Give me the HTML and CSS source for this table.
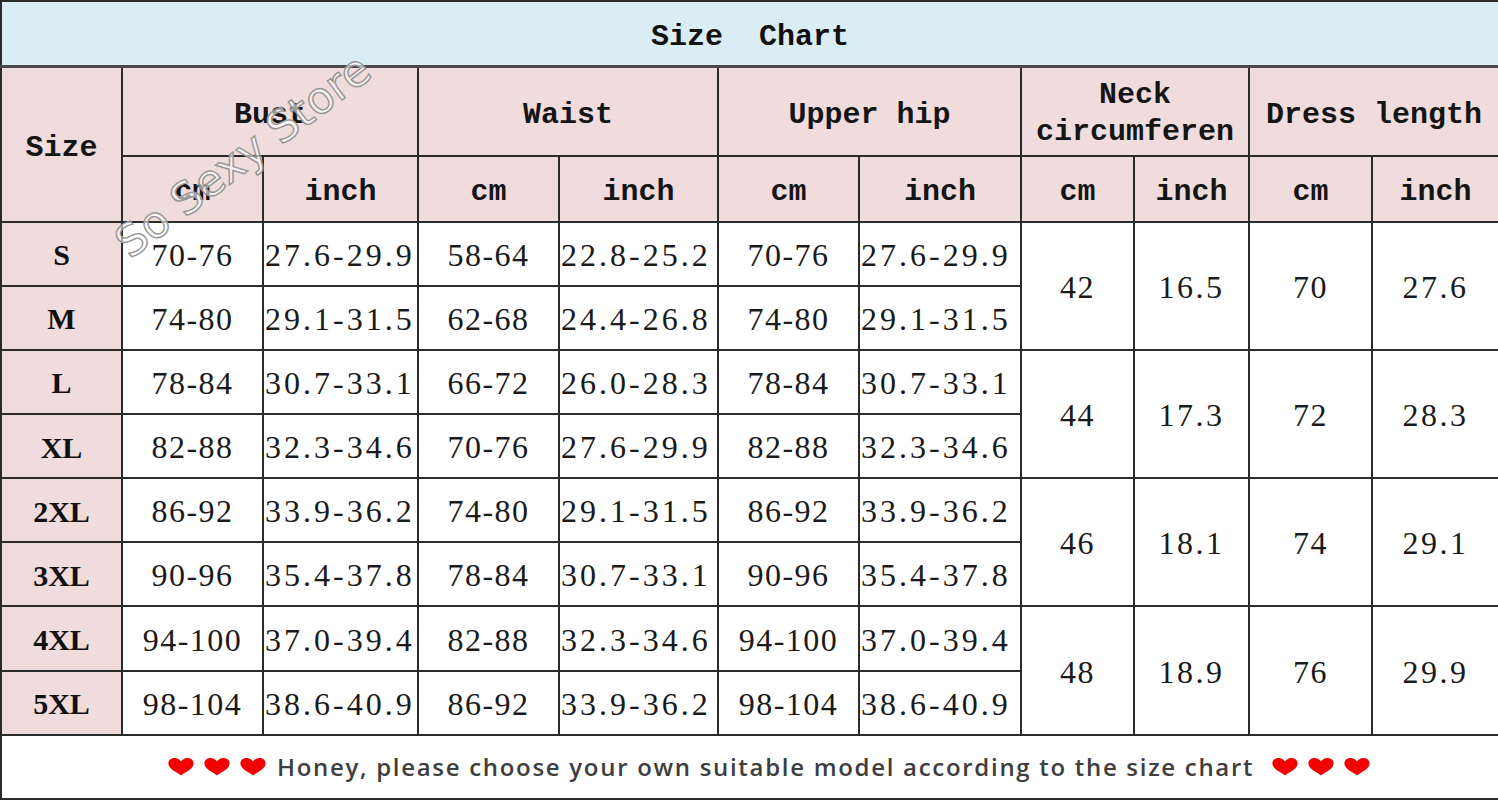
FILE: index.html
```html
<!DOCTYPE html>
<html>
<head>
<meta charset="utf-8">
<link rel="stylesheet" href="styles.css">
</head>
<body>
<div class="sheet">
<table class="chart">
  <colgroup>
    <col class="c-size"><col class="c1"><col class="c2"><col class="c3"><col class="c4"><col class="c5"><col class="c6"><col class="c7"><col class="c8"><col class="c9"><col class="c10">
  </colgroup>
  <tr class="title-row"><td colspan="11" class="title">Size&nbsp; Chart</td></tr>
  <tr class="head1">
    <td rowspan="2" class="hd">Size</td>
    <td colspan="2" class="hd">Bust</td>
    <td colspan="2" class="hd">Waist</td>
    <td colspan="2" class="hd">Upper hip</td>
    <td colspan="2" class="hd neck">Neck<br>circumferen</td>
    <td colspan="2" class="hd">Dress length</td>
  </tr>
  <tr class="head2">
    <td class="hd">cm</td><td class="hd">inch</td>
    <td class="hd">cm</td><td class="hd">inch</td>
    <td class="hd">cm</td><td class="hd">inch</td>
    <td class="hd">cm</td><td class="hd">inch</td>
    <td class="hd">cm</td><td class="hd">inch</td>
  </tr>
  <tr class="row">
    <td class="sz">S</td><td>70-76</td><td class="in">27.6-29.9</td><td>58-64</td><td class="in">22.8-25.2</td><td>70-76</td><td class="in">27.6-29.9</td>
    <td rowspan="2">42</td><td rowspan="2" class="dec">16.5</td><td rowspan="2">70</td><td rowspan="2" class="dec">27.6</td>
  </tr>
  <tr class="row">
    <td class="sz">M</td><td>74-80</td><td class="in">29.1-31.5</td><td>62-68</td><td class="in">24.4-26.8</td><td>74-80</td><td class="in">29.1-31.5</td>
  </tr>
  <tr class="row grp">
    <td class="sz">L</td><td>78-84</td><td class="in">30.7-33.1</td><td>66-72</td><td class="in">26.0-28.3</td><td>78-84</td><td class="in">30.7-33.1</td>
    <td rowspan="2">44</td><td rowspan="2" class="dec">17.3</td><td rowspan="2">72</td><td rowspan="2" class="dec">28.3</td>
  </tr>
  <tr class="row">
    <td class="sz">XL</td><td>82-88</td><td class="in">32.3-34.6</td><td>70-76</td><td class="in">27.6-29.9</td><td>82-88</td><td class="in">32.3-34.6</td>
  </tr>
  <tr class="row grp">
    <td class="sz">2XL</td><td>86-92</td><td class="in">33.9-36.2</td><td>74-80</td><td class="in">29.1-31.5</td><td>86-92</td><td class="in">33.9-36.2</td>
    <td rowspan="2">46</td><td rowspan="2" class="dec">18.1</td><td rowspan="2">74</td><td rowspan="2" class="dec">29.1</td>
  </tr>
  <tr class="row">
    <td class="sz">3XL</td><td>90-96</td><td class="in">35.4-37.8</td><td>78-84</td><td class="in">30.7-33.1</td><td>90-96</td><td class="in">35.4-37.8</td>
  </tr>
  <tr class="row grp">
    <td class="sz">4XL</td><td>94-100</td><td class="in">37.0-39.4</td><td>82-88</td><td class="in">32.3-34.6</td><td>94-100</td><td class="in">37.0-39.4</td>
    <td rowspan="2">48</td><td rowspan="2" class="dec">18.9</td><td rowspan="2">76</td><td rowspan="2" class="dec">29.9</td>
  </tr>
  <tr class="row">
    <td class="sz">5XL</td><td>98-104</td><td class="in">38.6-40.9</td><td>86-92</td><td class="in">33.9-36.2</td><td>98-104</td><td class="in">38.6-40.9</td>
  </tr>
  <tr class="foot-row">
    <td colspan="11" class="foot">
      <div class="note">
        <span class="hearts">
          <svg class="heart" viewBox="0 0 28 20"><path d="M14 19.5C10 16 0 12.5 0 6.2C0 2.4 3 0 7 0C10.2 0 12.4 1.8 14 4C15.6 1.8 17.8 0 21 0C25 0 28 2.4 28 6.2C28 12.5 18 16 14 19.5Z"/></svg>
          <svg class="heart" viewBox="0 0 28 20"><path d="M14 19.5C10 16 0 12.5 0 6.2C0 2.4 3 0 7 0C10.2 0 12.4 1.8 14 4C15.6 1.8 17.8 0 21 0C25 0 28 2.4 28 6.2C28 12.5 18 16 14 19.5Z"/></svg>
          <svg class="heart" viewBox="0 0 28 20"><path d="M14 19.5C10 16 0 12.5 0 6.2C0 2.4 3 0 7 0C10.2 0 12.4 1.8 14 4C15.6 1.8 17.8 0 21 0C25 0 28 2.4 28 6.2C28 12.5 18 16 14 19.5Z"/></svg>
        </span>
        <span class="note-text">Honey, please choose your own suitable model according to the size chart</span>
        <span class="hearts right">
          <svg class="heart" viewBox="0 0 28 20"><path d="M14 19.5C10 16 0 12.5 0 6.2C0 2.4 3 0 7 0C10.2 0 12.4 1.8 14 4C15.6 1.8 17.8 0 21 0C25 0 28 2.4 28 6.2C28 12.5 18 16 14 19.5Z"/></svg>
          <svg class="heart" viewBox="0 0 28 20"><path d="M14 19.5C10 16 0 12.5 0 6.2C0 2.4 3 0 7 0C10.2 0 12.4 1.8 14 4C15.6 1.8 17.8 0 21 0C25 0 28 2.4 28 6.2C28 12.5 18 16 14 19.5Z"/></svg>
          <svg class="heart" viewBox="0 0 28 20"><path d="M14 19.5C10 16 0 12.5 0 6.2C0 2.4 3 0 7 0C10.2 0 12.4 1.8 14 4C15.6 1.8 17.8 0 21 0C25 0 28 2.4 28 6.2C28 12.5 18 16 14 19.5Z"/></svg>
        </span>
      </div>
    </td>
  </tr>
</table>
<div class="watermark">So Sexy Store</div>
</div>
</body>
</html>
```

FILE: styles.css
```css
html, body {
  margin: 0;
  padding: 0;
  background: #ffffff;
}
.sheet {
  position: relative;
  width: 1498px;
  height: 800px;
  overflow: hidden;
}
.chart {
  width: 1498px;
  height: 800px;
  border-collapse: collapse;
  table-layout: fixed;
  border: 2px solid #333;
}
.c-size { width: 121px; }
.c1 { width: 141px; }
.c2 { width: 155px; }
.c3 { width: 141px; }
.c4 { width: 159px; }
.c5 { width: 141px; }
.c6 { width: 162px; }
.c7 { width: 113px; }
.c8 { width: 115px; }
.c9 { width: 123px; }
.c10 { width: 127px; }

.chart td {
  border: 2px solid #2b2b2b;
  text-align: center;
  vertical-align: middle;
  padding: 3px 0 0 0;
  color: #1a1a1a;
  font-family: "Liberation Serif", "DejaVu Serif", serif;
  font-size: 32px;
  letter-spacing: 1.5px;
  white-space: nowrap;
}
.title-row { height: 65px; }
.chart td.title {
  background: #dbedf4;
  font-family: "Liberation Mono", "DejaVu Sans Mono", monospace;
  font-weight: bold;
  font-size: 30px;
  letter-spacing: 0;
  color: #111;
  padding-top: 8px;
  border-bottom: 3px solid #4a4a4a;
}
.head1 { height: 90px; }
.head2 { height: 65px; }
.chart td.hd {
  background: #f0dcdc;
  font-family: "Liberation Mono", "DejaVu Sans Mono", monospace;
  font-weight: bold;
  font-size: 30px;
  letter-spacing: 0;
  color: #151515;
  line-height: 34px;
  padding-top: 7px;
}
.chart td.neck { line-height: 37px; padding-top: 4px; }
.row { height: 64px; }
.chart td.sz {
  background: #f0dcdc;
  font-weight: bold;
  font-size: 30px;
  letter-spacing: 0;
  color: #111;
}
.chart td.in {
  letter-spacing: 3px;
  text-align: left;
  padding-left: 1px;
}
.chart td.dec { letter-spacing: 2.5px; }
.grp td { border-top-color: #3a3a3a; }
.foot-row { height: 64px; }
.chart td.foot { background: #fff; padding-top: 0; }
.note {
  display: flex;
  align-items: center;
  justify-content: center;
  padding-left: 38px;
  font-family: "Open Sans", "Noto Sans", sans-serif;
  font-size: 24px;
  font-weight: 600;
  letter-spacing: 1.7px;
  color: #3e3e3e;
}
.hearts {
  display: flex;
  gap: 10px;
  align-items: center;
}
.heart {
  width: 26px;
  height: 18px;
  fill: #f20000;
  display: block;
}
.note-text { margin: 0 18px 0 11px; }
.watermark {
  position: absolute;
  left: 90px;
  top: 130px;
  transform: rotate(-37deg);
  transform-origin: center;
  font-family: "DejaVu Sans", sans-serif;
  font-size: 44px;
  font-weight: normal;
  color: rgba(255, 255, 255, 0.6);
  -webkit-text-stroke: 1.4px #959595;
  letter-spacing: 0;
  white-space: nowrap;
  pointer-events: none;
}
```
